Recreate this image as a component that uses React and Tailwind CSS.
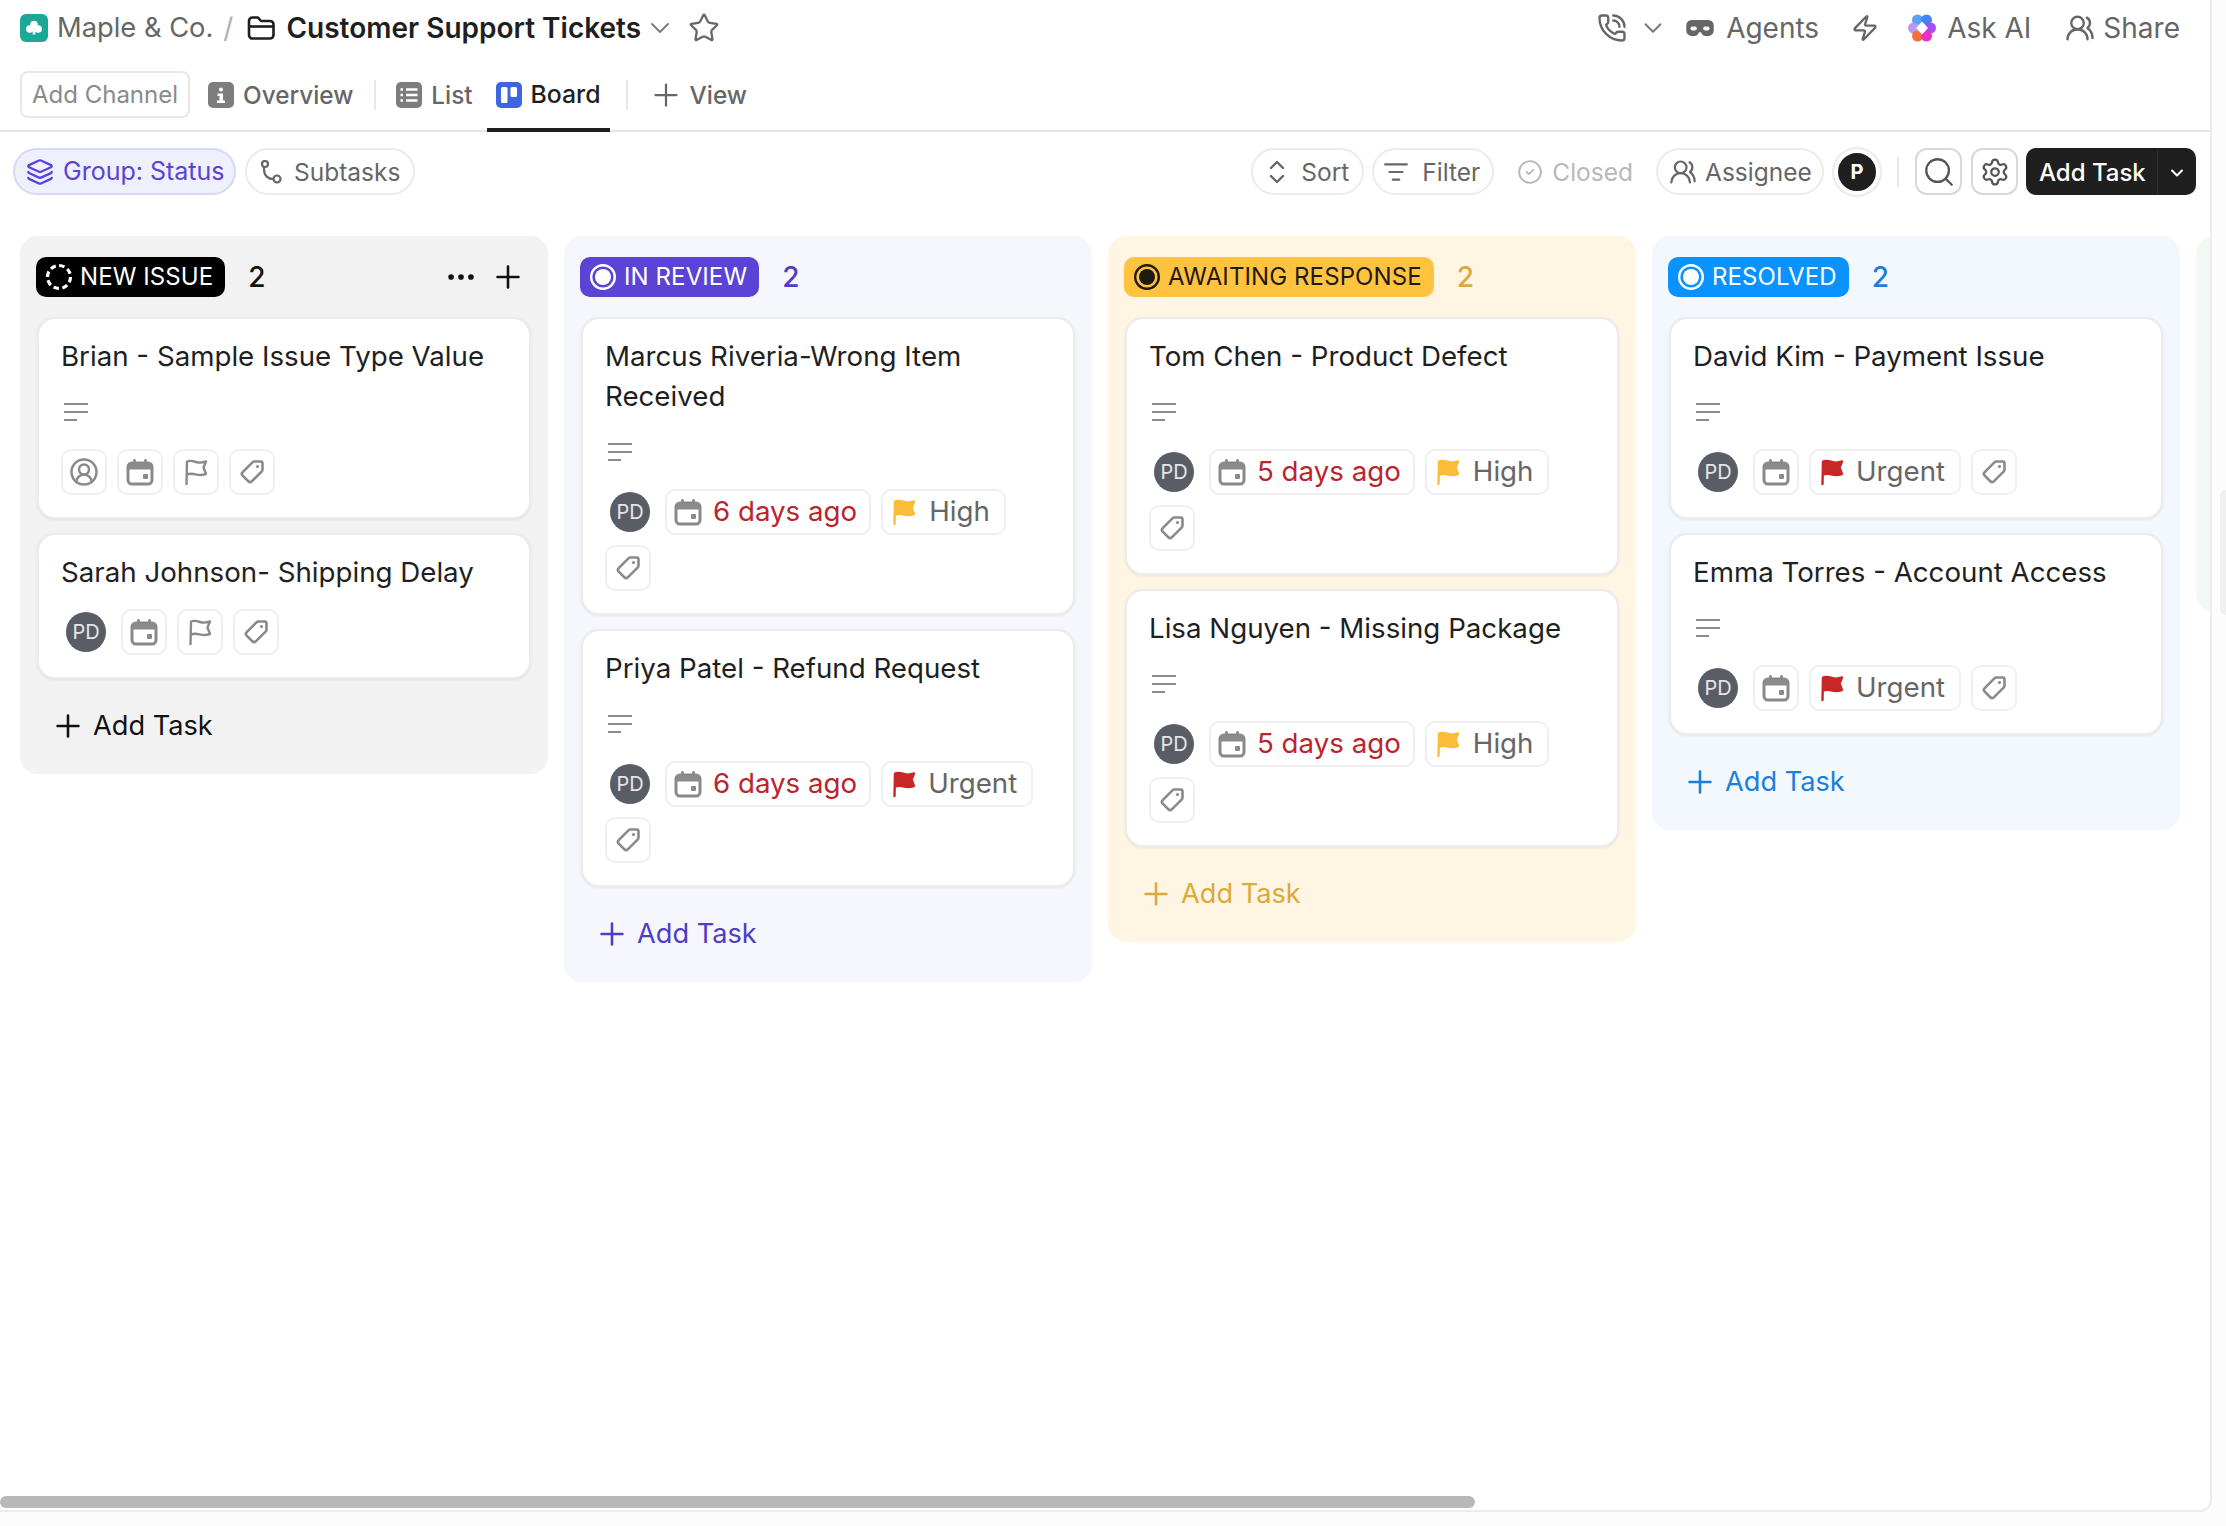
import React from 'react';
import clsx from 'clsx';
import { twMerge } from 'tailwind-merge';
import {
  ChevronDown,
  CircleCheck,
  CircleUserRound,
  Ellipsis,
  Layers,
  ListFilter,
  PhoneCall,
  Plus,
  Search,
  Settings,
  Star,
  UsersRound,
  Zap,
} from 'lucide-react';

const CalendarIcon = ({ className }) => (
  <svg viewBox="0 0 28 28" fill="none" className={className}>
    <rect x="2" y="5" width="24" height="21" rx="4" stroke="#8a8a8a" strokeWidth="3" />
    <path d="M3 6h22v5.500H3Z" fill="#8a8a8a" />
    <path d="M8.500 2.500v4M19.500 2.500v4" stroke="#8a8a8a" strokeWidth="2.800" strokeLinecap="round" />
    <rect x="17" y="16" width="5" height="5" rx="1" fill="#8a8a8a" />
  </svg>
);

const FlagIcon = ({ className, color, filled }) => (
  <svg viewBox="0 0 28 28" className={className}>
    <path
      d="M4.500 26 5 3.500C8 2 11 3 14 4c3 1 6 .8 10-.5l-2.500 6 2.500 6.500c-4 1.300-7.500 1.200-10.500.300-3-.800-5.500-1-8.500.200"
      fill={filled ? color : 'none'}
      stroke={color}
      strokeWidth="2.400"
      strokeLinecap="round"
      strokeLinejoin="round"
    />
  </svg>
);

const TagIcon = ({ className }) => (
  <svg viewBox="0 0 28 28" fill="none" className={className}>
    <path
      d="M16.500 3.500h6a2 2 0 0 1 2 2v6a3 3 0 0 1-.9 2.100L13.800 23.300a2.500 2.500 0 0 1-3.500 0l-5.600-5.600a2.500 2.500 0 0 1 0-3.500l9.700-9.800a3 3 0 0 1 2.100-.9Z"
      stroke="#8a8a8a"
      strokeWidth="2.600"
      strokeLinejoin="round"
    />
    <circle cx="19.500" cy="8.500" r="1.600" fill="#8a8a8a" />
  </svg>
);

const LinesIcon = () => (
  <svg viewBox="0 0 24 20" fill="none" className="h-[20px] w-[24px]">
    <path d="M0 2h24M0 10h24M0 18h13" stroke="#8c8c8c" strokeWidth="2" />
  </svg>
);

const FolderIcon = () => (
  <svg viewBox="0 0 28 26" fill="none" className="h-[26px] w-[28px]">
    <path
      d="M2 6a3.500 3.500 0 0 1 3.500-3.500h5.500l3 3.500h9a3.500 3.500 0 0 1 3.500 3.500V20a3.500 3.500 0 0 1-3.500 3.500h-17A3.500 3.500 0 0 1 2 20V6Z"
      stroke="#1f1f1f"
      strokeWidth="2.600"
      strokeLinejoin="round"
    />
    <path d="M2 11.500h24" stroke="#1f1f1f" strokeWidth="2.600" />
  </svg>
);

const ClubIcon = () => (
  <svg viewBox="0 0 28 28" className="h-[28px] w-[28px]">
    <rect width="28" height="28" rx="6" fill="#1ba896" />
    <circle cx="14" cy="10.500" r="3.800" fill="#fff" />
    <circle cx="9.800" cy="15" r="3.800" fill="#fff" />
    <circle cx="18.200" cy="15" r="3.800" fill="#fff" />
    <path d="M13.200 14h1.600l.7 6.500h-3Z" fill="#fff" />
  </svg>
);

const ViewIcon = ({ kind, color }) => (
  <svg viewBox="0 0 26 26" className="h-[26px] w-[26px]">
    <rect width="26" height="26" rx="5" fill={color} />
    {kind === 'info' && (
      <g fill="#fff">
        <circle cx="13" cy="7.500" r="2" />
        <path d="M9.500 11.500H15v7h2v2.500H9v-2.500h2.500v-4.500h-2Z" />
      </g>
    )}
    {kind === 'list' && (
      <path d="M4.500 7.500h2.500M10 7.500h11.500M4.500 13h2.500M10 13h11.500M4.500 18.500h2.500M10 18.500h11.500" stroke="#fff" strokeWidth="2.400" />
    )}
    {kind === 'board' && (
      <g fill="#fff">
        <rect x="5" y="5" width="6.500" height="16" rx="1.500" />
        <rect x="14.500" y="5" width="6.500" height="10" rx="1.500" />
      </g>
    )}
  </svg>
);

const MaskIcon = () => (
  <svg viewBox="0 0 28 18" className="h-[19px] w-[30px]">
    <path
      d="M6 1h16a5 5 0 0 1 5 5v5a5 5 0 0 1-5 5h-2.500a5 5 0 0 1-4.500-3.500h-2A5 5 0 0 1 8.500 16H6a5 5 0 0 1-5-5V6a5 5 0 0 1 5-5Z"
      fill="#666"
    />
    <rect x="5" y="7" width="6" height="4" rx="2" fill="#fff" />
    <rect x="17" y="7" width="6" height="4" rx="2" fill="#fff" />
  </svg>
);

const AskAiIcon = () => (
  <svg viewBox="0 0 30 30" className="h-[30px] w-[30px]">
    <circle cx="10.500" cy="7" r="5.500" fill="#5aa2f7" />
    <circle cx="19.500" cy="7" r="5.500" fill="#3c86f5" />
    <circle cx="6.500" cy="15" r="5.500" fill="#b79af0" />
    <circle cx="23.500" cy="15" r="5.500" fill="#a84cf0" />
    <circle cx="10.500" cy="23" r="5.500" fill="#f4703a" />
    <circle cx="19.500" cy="23" r="5.500" fill="#ec2fc4" />
    <path d="M15 8.500 21 15l-6 6.500L9 15Z" fill="#fff" />
  </svg>
);

const SubtasksIcon = () => (
  <svg viewBox="0 0 24 24" fill="none" stroke="#666" strokeWidth="2.200" className="h-[24px] w-[24px]">
    <circle cx="6" cy="4" r="3" />
    <circle cx="18" cy="19" r="3.500" />
    <path d="M5 7v2c0 7 4 10 9.500 10" />
  </svg>
);

const SortIcon = () => (
  <svg viewBox="0 0 20 26" fill="none" stroke="#666" strokeWidth="2.400" strokeLinecap="round" strokeLinejoin="round" className="h-[26px] w-[20px]">
    <path d="m4 9 6-6 6 6M4 17l6 6 6-6" />
  </svg>
);

const StatusIcon = ({ kind }) => {
  if (kind === 'dashed') {
    return (
      <svg viewBox="0 0 28 28" fill="none" className="h-[28px] w-[28px]">
        <circle cx="14" cy="14" r="11.500" stroke="#fff" strokeWidth="3.200" strokeDasharray="5.500 3.500" />
      </svg>
    );
  }
  if (kind === 'dark') {
    return (
      <svg viewBox="0 0 28 28" fill="none" className="h-[28px] w-[28px]">
        <circle cx="14" cy="14" r="11.800" stroke="#1f1a10" strokeWidth="2.400" />
        <circle cx="14" cy="14" r="8" fill="#1f1a10" />
      </svg>
    );
  }
  return (
    <svg viewBox="0 0 28 28" fill="none" className="h-[28px] w-[28px]">
      <circle cx="14" cy="14" r="11.800" stroke="#fff" strokeWidth="2.400" />
      <circle cx="14" cy="14" r="8" fill="#fff" />
    </svg>
  );
};

const Chip = ({ className, children }) => (
  <div className={clsx('flex h-[46px] items-center rounded-[10px] border-2 border-[#f0f0f0] bg-white', className)}>
    {children}
  </div>
);

const TaskCard = ({ task }) => (
  <div className="rounded-[18px] border-2 border-[#ececec] bg-white px-[22px] pb-[22px] pt-[17px] shadow-[0_1px_3px_rgba(0,0,0,0.08)]">
    <div className="text-[27.7px] leading-[40px] text-[#1f1f1f]">{task.title}</div>

    {task.desc ? (
      <div className="mt-[16px] flex h-[40px] items-center pl-[3px]">
        <LinesIcon />
      </div>
    ) : null}

    <div className="mt-[17px] flex flex-wrap gap-[10px]">
      {task.assignee ? (
        <div className="mx-[5px] flex h-[46px] items-center">
          <div className="flex h-[40px] w-[40px] items-center justify-center rounded-full bg-[#595d66] text-[20px] text-[#e6e6e6]">
            PD
          </div>
        </div>
      ) : (
        <Chip className="w-[46px] justify-center">
          <CircleUserRound className="h-[30px] w-[30px] text-[#8a8a8a]" strokeWidth={2} />
        </Chip>
      )}

      {task.date ? (
        <Chip className="pl-[7px] pr-[12px]">
          <CalendarIcon className="h-[28px] w-[28px]" />
          <span className="ml-[11px] text-[27.7px] text-[#b9262d]">{task.date}</span>
        </Chip>
      ) : (
        <Chip className="w-[46px] justify-center">
          <CalendarIcon className="h-[28px] w-[28px]" />
        </Chip>
      )}

      {task.priority === 'High' && (
        <Chip className="pl-[7px] pr-[14px]">
          <FlagIcon className="h-[28px] w-[28px]" color="#fbbc3c" filled />
          <span className="ml-[11px] text-[27.7px] text-[#666]">High</span>
        </Chip>
      )}
      {task.priority === 'Urgent' && (
        <Chip className="pl-[7px] pr-[14px]">
          <FlagIcon className="h-[28px] w-[28px]" color="#c62828" filled />
          <span className="ml-[10px] text-[27.7px] text-[#666]">Urgent</span>
        </Chip>
      )}
      {!task.priority && (
        <Chip className="w-[46px] justify-center">
          <FlagIcon className="h-[28px] w-[28px]" color="#8a8a8a" />
        </Chip>
      )}

      <Chip className="w-[46px] justify-center">
        <TagIcon className="h-[28px] w-[28px]" />
      </Chip>
    </div>
  </div>
);

const columns = [
  {
    name: 'NEW ISSUE',
    icon: 'dashed',
    bg: 'bg-[#f2f2f2]',
    pill: 'bg-black text-white',
    accent: 'text-[#111]',
    controls: true,
    tasks: [
      { title: 'Brian - Sample Issue Type Value', desc: true },
      { title: 'Sarah Johnson- Shipping Delay', assignee: true },
    ],
  },
  {
    name: 'IN REVIEW',
    icon: 'ring',
    bg: 'bg-[#f6f6fd]',
    pill: 'bg-[#5b43d6] text-white',
    accent: 'text-[#4f3ec4]',
    tasks: [
      { title: 'Marcus Riveria-Wrong Item Received', desc: true, assignee: true, date: '6 days ago', priority: 'High' },
      { title: 'Priya Patel - Refund Request', desc: true, assignee: true, date: '6 days ago', priority: 'Urgent' },
    ],
  },
  {
    name: 'AWAITING RESPONSE',
    icon: 'dark',
    bg: 'bg-[#fef5e3]',
    pill: 'bg-[#ffc340] text-[#1f1a10]',
    accent: 'text-[#dcaa3a]',
    tasks: [
      { title: 'Tom Chen - Product Defect', desc: true, assignee: true, date: '5 days ago', priority: 'High' },
      { title: 'Lisa Nguyen - Missing Package', desc: true, assignee: true, date: '5 days ago', priority: 'High' },
    ],
  },
  {
    name: 'RESOLVED',
    icon: 'ring',
    bg: 'bg-[#f3f8fe]',
    pill: 'bg-[#0a93ff] text-white',
    accent: 'text-[#1a80dc]',
    tasks: [
      { title: 'David Kim - Payment Issue', desc: true, assignee: true, priority: 'Urgent' },
      { title: 'Emma Torres - Account Access', desc: true, assignee: true, priority: 'Urgent' },
    ],
  },
];

const BoardColumn = ({ column }) => (
  <div className={clsx('w-[528px] shrink-0 rounded-[18px] px-[17px] pb-[28px] pt-[21px]', column.bg)}>
    <div className="flex h-[40px] items-center">
      <div className={clsx('-ml-[1px] flex h-[40px] items-center gap-[7px] rounded-[10px] pl-[9px] pr-[12px] text-[24px] tracking-[0.1px]', column.pill)}>
        <StatusIcon kind={column.icon} />
        {column.name}
      </div>
      <span className={clsx('ml-[23px] text-[28px] font-medium', column.accent)}>{column.tasks.length}</span>
      {column.controls && (
        <div className="ml-auto flex items-center gap-[12px] pr-[5px] text-[#111]">
          <Ellipsis className="h-[34px] w-[34px]" strokeWidth={2} />
          <Plus className="h-[36px] w-[36px]" strokeWidth={1.7} />
        </div>
      )}
    </div>

    <div className="mt-[20px] flex flex-col gap-[14px]">
      {column.tasks.map((task) => (
        <TaskCard key={task.title} task={task} />
      ))}
    </div>

    <div className={clsx('mt-[27px] flex h-[40px] items-center gap-[7px] pl-[13px] text-[27.2px]', column.accent)}>
      <Plus className="h-[36px] w-[36px]" strokeWidth={1.7} />
      Add Task
    </div>
  </div>
);

const Pill = ({ className, children }) => (
  <div className={twMerge('flex h-[47px] items-center rounded-full border-2 border-[#ebebeb] bg-white pt-[1px] text-[24.5px] text-[#666]', className)}>
    {children}
  </div>
);

const TopAction = ({ icon, label, className }) => (
  <div className={clsx('flex items-center text-[28px] text-[#666]', className)}>
    {icon}
    {label}
  </div>
);

const ViewTab = ({ icon, label, active, className }) => (
  <div className={twMerge('relative flex h-[74px] items-center gap-[9px] text-[24.3px] font-medium', active ? 'text-[#1f1f1f]' : 'text-[#666]', className)}>
    {icon}
    {label}
    {active && <div className="absolute -left-[9px] -right-[9px] bottom-0 h-[4px] bg-[#1f1f1f]" />}
  </div>
);

export default function App() {
  return (
    <div className="relative h-[1526px] w-[2226px] overflow-hidden bg-[#fcfcfc] font-['Inter',sans-serif]">
      {/* Main panel */}
      <div className="relative h-[1512px] w-[2212px] overflow-hidden rounded-br-[12px] border-b-2 border-r-2 border-[#ececec] bg-white">
        {/* Breadcrumb row */}
        <div className="flex h-[56px] items-center pl-[20px] pr-[30px] text-[28px]">
          <ClubIcon />
          <span className="ml-[9px] text-[27.3px] text-[#666]">Maple &amp; Co.</span>
          <span className="ml-[10px] text-[#b0b0b0]">/</span>
          <span className="ml-[14px]">
            <FolderIcon />
          </span>
          <span className="ml-[11px] font-semibold text-[#1f1f1f]">Customer Support Tickets</span>
          <ChevronDown className="ml-[3px] h-[32px] w-[32px] text-[#777]" strokeWidth={1.4} />
          <Star className="ml-[12px] h-[32px] w-[32px] text-[#666]" strokeWidth={1.7} />

          <div className="ml-auto flex items-center">
            <PhoneCall className="h-[30px] w-[30px] text-[#666]" strokeWidth={1.9} />
            <ChevronDown className="ml-[11px] h-[30px] w-[30px] text-[#777]" strokeWidth={1.5} />
            <TopAction className="ml-[17px] gap-[11px]" icon={<MaskIcon />} label="Agents" />
            <Zap className="ml-[32px] h-[28px] w-[28px] text-[#666]" strokeWidth={2} />
            <TopAction className="ml-[28px] gap-[10px]" icon={<AskAiIcon />} label="Ask AI" />
            <TopAction className="ml-[34px] gap-[8px]" icon={<UsersRound className="h-[30px] w-[30px]" strokeWidth={1.9} />} label="Share" />
          </div>
        </div>

        {/* Views row */}
        <div className="flex h-[76px] items-start border-b-2 border-[#e6e6e6] pl-[20px] pt-[15px]">
          <div className="flex h-[47px] w-[170px] items-center justify-center rounded-[8px] border-2 border-[#e8e8e8] pt-[1px] text-[24px] text-[#8a8a8a]">
            Add Channel
          </div>
          <div className="-mt-[13px] ml-[18px] flex h-[74px] items-center">
            <ViewTab icon={<ViewIcon kind="info" color="#7d7d7d" />} label="Overview" />
            <div className="ml-[21px] h-[30px] w-[2px] bg-[#e8e8e8]" />
            <div className="ml-[20px]">
              <ViewTab icon={<ViewIcon kind="list" color="#7d7d7d" />} label="List" />
            </div>
            <div className="ml-[23px]">
              <ViewTab active className="text-[24.8px]" icon={<ViewIcon kind="board" color="#3f66e0" />} label="Board" />
            </div>
            <div className="ml-[25px] h-[30px] w-[2px] bg-[#e8e8e8]" />
            <div className="ml-[20px]">
              <ViewTab className="gap-[6px]" icon={<Plus className="h-[36px] w-[36px] text-[#666]" strokeWidth={1.5} />} label="View" />
            </div>
          </div>
        </div>

        {/* Toolbar */}
        <div className="mt-[16px] flex items-center pl-[13px] pr-[14px]">
          <Pill className="w-[223px] gap-[9px] border-[#d6d8f6] bg-[#eef0fc] pl-[11px] text-[25px] text-[#5a43d6]">
            <Layers className="h-[28px] w-[28px]" strokeWidth={2} />
            Group: Status
          </Pill>
          <Pill className="ml-[9px] w-[170px] gap-[11px] pl-[12px]">
            <SubtasksIcon />
            Subtasks
          </Pill>

          <div className="ml-auto flex items-center">
            <Pill className="w-[113px] gap-[14px] pl-[14px]">
              <SortIcon />
              Sort
            </Pill>
            <Pill className="ml-[8px] w-[122px] gap-[13px] pl-[9px]">
              <ListFilter className="h-[26px] w-[26px]" strokeWidth={2} />
              Filter
            </Pill>
            <div className="ml-[23px] flex items-center gap-[9px] pt-[1px] text-[24.5px] text-[#b8b8b8]">
              <CircleCheck className="h-[26px] w-[26px]" strokeWidth={1.75} />
              Closed
            </div>
            <Pill className="ml-[23px] w-[168px] gap-[8px] pl-[11px]">
              <UsersRound className="h-[28px] w-[28px]" strokeWidth={1.9} />
              Assignee
            </Pill>
            <div className="ml-[10px] flex h-[46px] w-[46px] items-center justify-center rounded-full border-[4px] border-white bg-[#1f1f1f] text-[20px] font-bold text-white shadow-[0_0_0_2px_#ebebeb]">
              P
            </div>
            <div className="ml-[17px] h-[30px] w-[2px] bg-[#e8e8e8]" />
            <div className="ml-[16px] flex h-[47px] w-[47px] items-center justify-center rounded-[12px] border-2 border-[#d8d8d8]">
              <Search className="h-[34px] w-[34px] text-[#555]" strokeWidth={1.6} />
            </div>
            <div className="ml-[9px] flex h-[47px] w-[47px] items-center justify-center rounded-[12px] border-2 border-[#d8d8d8]">
              <Settings className="h-[30px] w-[30px] text-[#555]" strokeWidth={1.8} />
            </div>
            <div className="ml-[8px] flex h-[47px] w-[170px] items-center rounded-[10px] bg-[#1f1f1f] pt-[2px] text-[24px] font-medium text-white">
              <span className="w-[131px] pl-[13px]">Add Task</span>
              <div className="flex h-full flex-1 items-center justify-center border-l border-[#2e2e2e]">
                <ChevronDown className="h-[20px] w-[20px]" strokeWidth={2.5} />
              </div>
            </div>
          </div>
        </div>

        {/* Board */}
        <div className="mt-[41px] flex items-start gap-[16px] pl-[20px]">
          {columns.map((column) => (
            <BoardColumn key={column.name} column={column} />
          ))}
          <div className="h-[376px] w-[528px] shrink-0 rounded-[18px] bg-[#f5f9f5]" />
        </div>

        {/* Horizontal scrollbar */}
        <div className="absolute bottom-[2px] left-0 h-[12px] w-[1475px] rounded-full bg-[#b8b8b8]" />
      </div>

      {/* Side handle, peeking in from the right */}
      <div className="absolute right-0 top-[490px] h-[125px] w-[6px] rounded-l-[6px] bg-[#f0f0f0]" />
    </div>
  );
}
